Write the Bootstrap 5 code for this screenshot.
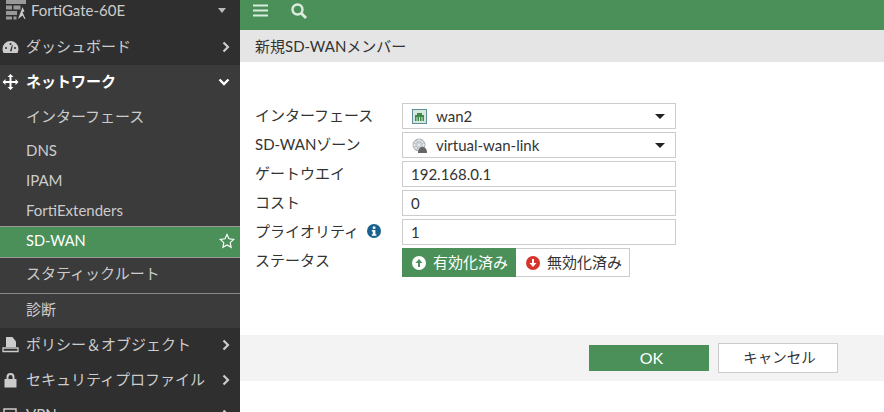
<!DOCTYPE html>
<html lang="ja"><head><meta charset="utf-8"><title>新規SD-WANメンバー</title>
<link href="https://cdn.jsdelivr.net/npm/bootstrap@5.3.0/dist/css/bootstrap.min.css" rel="stylesheet">
<style>
html,body{height:412px;overflow:hidden;margin:0}
body{font-family:Lato,"Noto Sans CJK JP",sans-serif;font-size:15px;color:#333;background:#fff}
.shell{height:412px}
.side{width:240px;flex:none;background:#2f2f2f;color:#ddd;overflow:hidden;height:412px}
.brand{height:30px;padding:0 0 10px 6px;color:#ccc;font-size:15px}
.brand span{margin-left:5px}
.tri{margin-left:auto;margin-right:14px;width:0;height:0;border:4px solid transparent;border-top:5px solid #bbb;border-bottom:0}
.topitem{height:35px;padding:0 10px 2px 2px;font-size:15px;color:#ccc}
.topitem .ic{width:17px;flex:none;margin-right:7px}
.topitem .chev{margin-left:auto}
.grp{background:#3b3b3b;height:263px}
.grp .topitem{color:#fff;font-weight:700}
.sub{padding-left:26px;color:#ccc;display:flex;align-items:center;font-size:15px;padding-bottom:2px}
.sub1{height:33px}.sub2{height:30px}
.first{padding-bottom:0;margin-bottom:3px}
.sub.act{background:#4a9058;color:#fff;height:32px;border-top:1px solid #999;border-bottom:1px solid #999;padding-right:5px;margin-top:0}
.sub.act span{font-size:14.6px}
.sub.act svg{margin-left:auto}
.rule{border-top:1px solid #8a8a8a;margin-top:2px}
.topb{height:30px;background:#4a9058;padding:0 0 9px 13px;gap:23px}
.head{height:32px;background:#e5e5e5;padding-left:15px;font-size:15px;color:#333}
.formz{padding:41px 0 0 15px;width:436px;height:273px}
.frow{height:29px;align-items:center}
.frow label{width:147px;flex:none;font-size:15px;margin-bottom:5px;color:#333}
.fld{width:274px;height:26px;border:1px solid #ccc;padding:0 9px;font-size:15px;color:#333;background:#fff;border-radius:0;margin-bottom:3px}
input.fld{padding:0 8px}
.fld .tx{margin-left:9px}
.fld .dn{margin-left:auto;margin-right:1px;width:0;height:0;border:5px solid transparent;border-top:5px solid #222;border-bottom:0}
.tog{height:29px;width:114px;padding:0 0 0 10px;font-size:15px;border:1px solid #ccc;border-left:0;color:#333;white-space:nowrap;gap:7px}
.tog.on{background:#4a9058;color:#fff;border:0}
.foot{height:46px;background:#f3f3f3;padding-left:349px;gap:9px}
.okb{width:120px;height:26px;background:#4a9058;color:#fff;font-size:16px;border:0;border-radius:0;padding:0 0 0 5px}
.cnl{width:120px;height:30px;background:#fff;color:#333;font-size:14.5px;border:1px solid #ccc;border-radius:0;padding:0 0 0 3px}
</style></head><body>
<div class="d-flex shell">
<aside class="side">
 <div class="brand d-flex align-items-center">
  <svg width="20" height="20" viewBox="0 0 20 20"><g fill="#999"><rect x="0" y="0" width="20" height="4"/><rect x="0" y="5.500" width="6" height="4"/><rect x="7.500" y="5.500" width="7" height="4"/><rect x="0" y="11" width="11" height="4"/><rect x="0" y="16.500" width="6" height="3"/><rect x="7.500" y="16.500" width="3" height="3"/></g><path d="M12 19l3.500-9 1-3 2 4.500-2 .5 3 7h-1l-2-3.500z" fill="#ccc"/></svg>
  <span>FortiGate-60E</span><i class="tri"></i></div>
 <div class="topitem d-flex align-items-center">
  <svg class="ic" viewBox="0 0 17 14" height="14"><path d="M8.500 1A8 8 0 0 0 .5 9c0 1.500.4 2.800 1 4h14c.6-1.200 1-2.500 1-4a8 8 0 0 0-8-8z" fill="#ccc"/><circle cx="8.500" cy="4" r="1" fill="#2f2f2f"/><circle cx="4" cy="8" r="1" fill="#2f2f2f"/><circle cx="13" cy="8" r="1" fill="#2f2f2f"/><path d="M8 11l2-6 .8.300L9.500 11.500z" fill="#2f2f2f"/></svg>
  <span>ダッシュボード</span>
  <svg class="chev" width="8" height="12" viewBox="0 0 8 12"><path d="M1.500 1.500L6 6l-4.500 4.500" fill="none" stroke="#ccc" stroke-width="2.200"/></svg></div>
 <div class="grp">
  <div class="topitem d-flex align-items-center">
   <svg class="ic" viewBox="0 0 16 16" height="16"><path d="M8 0l3 3H9v4h4V5l3 3-3 3V9H9v4h2l-3 3-3-3h2V9H3v2L0 8l3-3v2h4V3H5z" fill="#fff"/></svg>
   <span>ネットワーク</span>
   <svg class="chev" width="12" height="8" viewBox="0 0 12 8"><path d="M1.500 1.500L6 6l4.500-4.500" fill="none" stroke="#fff" stroke-width="2.400"/></svg></div>
  <div class="sub sub1 first">インターフェース</div>
  <div class="sub sub2">DNS</div>
  <div class="sub sub2">IPAM</div>
  <div class="sub sub2">FortiExtenders</div>
  <div class="sub act"><span>SD-WAN</span><svg width="16" height="16" viewBox="0 0 16 16"><path d="M8 1.500l2 4.300 4.700.600-3.500 3.200.9 4.700L8 12l-4.100 2.300.9-4.700L1.300 6.400 6 5.800z" fill="none" stroke="#fff" stroke-width="1.200"/></svg></div>
  <div class="sub sub1">スタティックルート</div>
  <div class="rule"></div>
  <div class="sub sub1">診断</div>
 </div>
 <div class="topitem d-flex align-items-center">
  <svg class="ic" viewBox="0 0 17 16" height="16"><path d="M4 0h6.500L14 4.500V10H4z" fill="#ccc"/><path d="M1 11h15v3.500H1z" fill="none" stroke="#ccc" stroke-width="1.300"/></svg>
  <span>ポリシー＆オブジェクト</span>
  <svg class="chev" width="8" height="12" viewBox="0 0 8 12"><path d="M1.500 1.500L6 6l-4.500 4.500" fill="none" stroke="#ccc" stroke-width="2.200"/></svg></div>
 <div class="topitem d-flex align-items-center">
  <svg class="ic" viewBox="0 0 17 16" height="16"><path d="M4.500 7V5a4 4 0 0 1 8 0v2h2v8.500H2.500V7zm2 0h4V5a2 2 0 0 0-4 0z" fill="#ccc"/></svg>
  <span>セキュリティプロファイル</span>
  <svg class="chev" width="8" height="12" viewBox="0 0 8 12"><path d="M1.500 1.500L6 6l-4.500 4.500" fill="none" stroke="#ccc" stroke-width="2.200"/></svg></div>
 <div class="topitem d-flex align-items-center">
  <svg class="ic" viewBox="0 0 17 16" height="16"><rect x="2" y="2" width="12" height="11" fill="none" stroke="#ccc" stroke-width="1.500"/></svg>
  <span>VPN</span>
  <svg class="chev" width="8" height="12" viewBox="0 0 8 12"><path d="M1.500 1.500L6 6l-4.500 4.500" fill="none" stroke="#ccc" stroke-width="2.200"/></svg></div>
</aside>
<main class="flex-grow-1">
 <div class="topb d-flex align-items-center">
  <svg width="15" height="13" viewBox="0 0 15 13"><path d="M0 1.500h15M0 6.500h15M0 11.500h15" stroke="#dcebdf" stroke-width="2.200"/></svg>
  <svg width="16" height="16" viewBox="0 0 16 16"><circle cx="6.500" cy="6.500" r="5" fill="none" stroke="#dcebdf" stroke-width="2.400"/><path d="M10 10l5 5" stroke="#dcebdf" stroke-width="2.800"/></svg>
 </div>
 <div class="head d-flex align-items-center">新規SD-WANメンバー</div>
 <div class="formz">
  <div class="frow d-flex"><label>インターフェース</label><div class="fld d-flex align-items-center">
   <svg width="15" height="15" viewBox="0 0 15 15"><rect width="15" height="15" fill="#d6e8dc"/><rect x=".5" y=".5" width="14" height="14" fill="none" stroke="#5b8f9c"/><path d="M3 12V6h2V4h5v2h2v6z" fill="#3f8a4a"/><path d="M5 8v4M7.500 8v4M10 8v4" stroke="#d8e8dc"/></svg>
   <span class="tx">wan2</span><i class="dn"></i></div></div>
  <div class="frow d-flex"><label>SD-WANゾーン</label><div class="fld d-flex align-items-center">
   <svg width="15" height="15" viewBox="0 0 15 15"><circle cx="7" cy="7" r="6.500" fill="#aeb6bb"/><circle cx="7" cy="7" r="4.500" fill="none" stroke="#eef0f1"/><path d="M7 .5v13M.5 7h13M2.500 3l9 8M11.500 3l-9 8" stroke="#eef0f1" stroke-width=".8"/><path d="M6 15c0-3.500 1.500-6 4.500-6s4.500 2.500 4.500 6z" fill="#666"/></svg>
   <span class="tx">virtual-wan-link</span><i class="dn"></i></div></div>
  <div class="frow d-flex"><label>ゲートウエイ</label><input class="fld" value="192.168.0.1"></div>
  <div class="frow d-flex"><label>コスト</label><input class="fld" value="0"></div>
  <div class="frow d-flex"><label class="d-flex align-items-center">プライオリティ<svg class="ms-2" width="14" height="14" viewBox="0 0 14 14"><circle cx="7" cy="7" r="7" fill="#17608f"/><rect x="5.800" y="2.500" width="2.600" height="2.400" fill="#fff"/><path d="M4.800 6h3.600v4.300h1v1.400H4.800v-1.400h1V7.400h-1z" fill="#fff"/></svg></label><input class="fld" value="1"></div>
  <div class="frow d-flex"><label>ステータス</label><div class="d-flex">
   <div class="tog on d-flex align-items-center"><svg width="14" height="14" viewBox="0 0 14 14"><circle cx="7" cy="7" r="7" fill="#fff"/><path d="M7 3L3.500 7H6v4h2V7h2.500z" fill="#4a9058"/></svg>有効化済み</div>
   <div class="tog d-flex align-items-center"><svg width="14" height="14" viewBox="0 0 14 14"><circle cx="7" cy="7" r="7" fill="#d5352b"/><path d="M7 11L3.500 7H6V3h2v4h2.500z" fill="#fff"/></svg>無効化済み</div>
  </div></div>
 </div>
 <div class="foot d-flex align-items-center">
  <button class="btn okb" type="button">OK</button>
  <button class="btn cnl" type="button">キャンセル</button>
 </div>
</main>
</div>
</body></html>
